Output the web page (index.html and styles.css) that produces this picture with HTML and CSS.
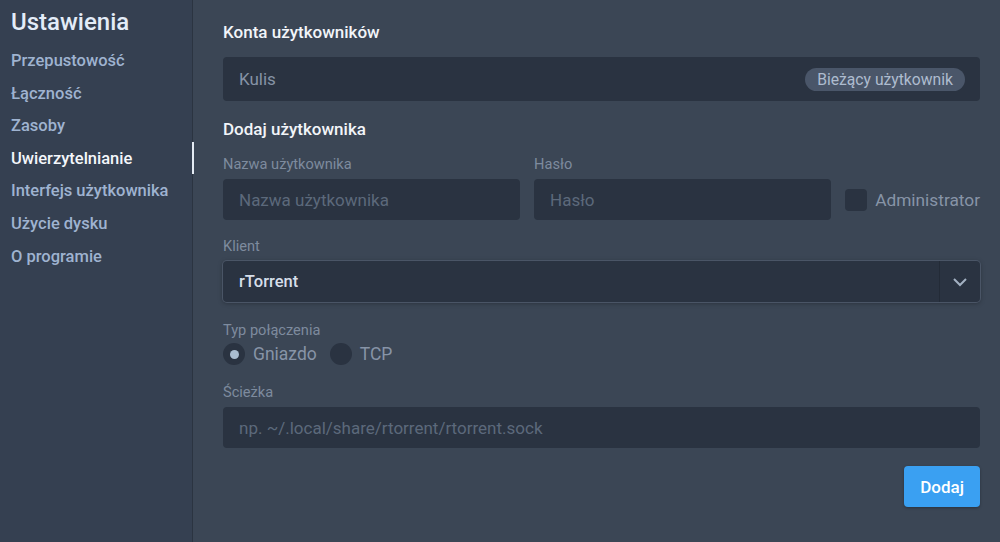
FILE: index.html
```html
<!DOCTYPE html>
<html lang="pl">
<head>
  <meta charset="UTF-8" />
  <title>Ustawienia</title>
  <meta name="viewport" content="width=device-width,initial-scale=1" />
  <link rel="stylesheet" href="styles.css">
</head>
<body>
  <nav class="sidebar">
    <h1>Ustawienia</h1>
    <ul class="menu">
      <li>Przepustowość</li>
      <li>Łączność</li>
      <li>Zasoby</li>
      <li class="active">Uwierzytelnianie</li>
      <li>Interfejs użytkownika</li>
      <li>Użycie dysku</li>
      <li>O programie</li>
    </ul>
  </nav>

  <main class="content">
    <h2 class="first">Konta użytkowników</h2>
    <div class="account">
      <span class="account-name">Kulis</span>
      <span class="badge">Bieżący użytkownik</span>
    </div>

    <h2>Dodaj użytkownika</h2>
    <div class="row">
      <label class="field">
        <span class="label">Nazwa użytkownika</span>
        <input type="text" placeholder="Nazwa użytkownika">
      </label>
      <label class="field">
        <span class="label">Hasło</span>
        <input type="password" placeholder="Hasło">
      </label>
      <label class="check">
        <span class="box"></span>
        Administrator
      </label>
    </div>

    <div class="field field-select">
      <span class="label">Klient</span>
      <div class="select">
        <span class="select-value">rTorrent</span>
        <span class="select-arrow">
          <svg width="16" height="10" viewBox="0 0 16 10"><path d="M2 2l6 6 6-6" fill="none" stroke="#a3b1c2" stroke-width="2"/></svg>
        </span>
      </div>
    </div>

    <div class="field field-radio">
      <span class="label">Typ połączenia</span>
      <div class="radios">
        <span class="radio checked"><span class="dot"></span>Gniazdo</span>
        <span class="radio"><span class="dot"></span>TCP</span>
      </div>
    </div>

    <label class="field">
      <span class="label">Ścieżka</span>
      <input type="text" placeholder="np. ~/.local/share/rtorrent/rtorrent.sock">
    </label>

    <div class="actions">
      <button class="primary">Dodaj</button>
    </div>
  </main>
</body>
</html>
```

FILE: styles.css
```css
html, body {
  height: 100%;
}
body {
  margin: 0;
  display: flex;
  background: #3b4655;
  font-family: Roboto, "Noto Sans", sans-serif;
  color: #dfe7f2;
}
.sidebar {
  width: 192px;
  flex: none;
  background: #354051;
  border-right: 1px solid #2b3441;
}
.sidebar h1 {
  margin: 8px 0 8px 11px;
  font-size: 24px;
  line-height: 28px;
  font-weight: 500;
  color: #e3ecf8;
}
.menu {
  list-style: none;
  margin: 0;
  padding: 0;
}
.menu li {
  position: relative;
  padding-left: 11px;
  font-size: 16.5px;
  line-height: 33px;
  height: 32.6px;
  font-weight: 500;
  color: #9fb3d0;
}
.menu li.active {
  color: #f4f7fb;
}
.menu li.active::after {
  content: "";
  position: absolute;
  right: -2px;
  top: 0;
  width: 2px;
  height: 32px;
  background: #e4ebf3;
}
.content {
  flex: 1;
  padding: 22px 20px 0 30px;
}
h2 {
  margin: 0 0 17px;
  font-size: 17px;
  line-height: 20px;
  font-weight: 500;
  color: #f2f5f9;
}
h2.first {
  margin-bottom: 15px;
}
.account {
  display: flex;
  align-items: center;
  justify-content: space-between;
  height: 44px;
  box-sizing: border-box;
  padding: 0 15px 0 16px;
  background: #2a3341;
  border-radius: 4px;
  margin-bottom: 18px;
  font-size: 17px;
}
.account-name {
  color: #8693a6;
}
.badge {
  background: #4a5669;
  color: #aebccf;
  font-size: 15.7px;
  line-height: 23px;
  padding: 0 12px;
  border-radius: 12px;
}
.row {
  display: flex;
  align-items: flex-end;
  gap: 15px;
}
.row .field {
  flex: 1;
}
.row .field + .field {
  margin-left: -1px;
}
.field {
  display: block;
  margin-bottom: 18px;
}
.field-select {
  margin-bottom: 20px;
}
.field-radio {
  margin-bottom: 19px;
}
.label {
  display: block;
  font-size: 14.6px;
  line-height: 17px;
  margin-bottom: 6px;
  color: #7e8b9e;
}
input {
  display: block;
  width: 100%;
  box-sizing: border-box;
  height: 41px;
  padding: 0 16px;
  border: 0;
  border-radius: 4px;
  background: #2a3341;
  font-family: inherit;
  font-size: 17px;
  color: #dfe7f2;
  outline: none;
}
input::placeholder {
  color: #5c697b;
}
.check {
  display: flex;
  align-items: center;
  gap: 8px;
  height: 41px;
  margin-bottom: 18px;
  margin-left: -1px;
  font-size: 17.3px;
  color: #8794a7;
}
.box {
  width: 22px;
  height: 22px;
  border-radius: 4px;
  background: #2a3341;
}
.select {
  display: flex;
  height: 41px;
  border-radius: 4px;
  background: #2a3341;
  box-shadow: 0 0 0 1px #4a5566, 0 1px 5px rgba(0, 0, 0, .35);
}
.select-value {
  flex: 1;
  display: flex;
  align-items: center;
  padding-left: 16px;
  font-size: 16.5px;
  font-weight: 500;
  color: #d6dee9;
}
.select-arrow {
  width: 40px;
  display: flex;
  align-items: center;
  justify-content: center;
  border-left: 1px solid #232b37;
}
.radios {
  display: flex;
  gap: 13px;
  margin-top: -2px;
}
.radio {
  display: flex;
  align-items: center;
  gap: 8px;
  font-size: 17.5px;
  line-height: 22px;
  color: #8794a7;
}
.radio .dot {
  width: 22px;
  height: 22px;
  border-radius: 50%;
  background: #2a3341;
  display: flex;
  align-items: center;
  justify-content: center;
}
.radio.checked .dot::after {
  content: "";
  width: 9px;
  height: 9px;
  border-radius: 50%;
  background: #a9bccf;
}
.actions {
  display: flex;
  justify-content: flex-end;
}
.primary {
  height: 41px;
  padding: 0 16px;
  border: 0;
  border-radius: 4px;
  background: #3aa0f2;
  font-family: inherit;
  font-size: 17px;
  font-weight: 500;
  color: #fff;
  box-shadow: 0 1px 3px rgba(0, 0, 0, .3);
}
```
